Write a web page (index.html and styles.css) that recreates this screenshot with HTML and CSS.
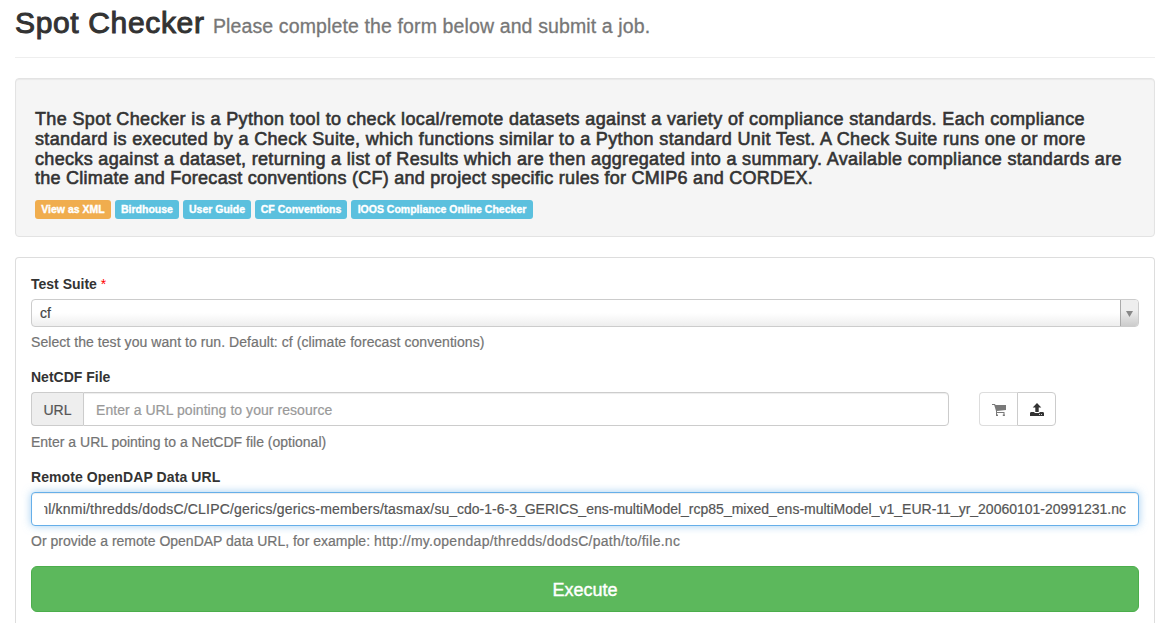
FILE: index.html
```html
<!DOCTYPE html>
<html lang="en">
<head>
<meta charset="utf-8">
<title>Spot Checker</title>
<link rel="stylesheet" href="styles.css">
</head>
<body>
<header class="page-header">
<h2 class="title"><span class="title-main">Spot Checker</span> <small class="title-sub">Please complete the form below and submit a job.</small></h2>
</header>
<section class="well">
<h4 class="intro">
<span class="line l1">The Spot Checker is a Python tool to check local/remote datasets against a variety of compliance standards. Each compliance</span>
<span class="line l2">standard is executed by a Check Suite, which functions similar to a Python standard Unit Test. A Check Suite runs one or more</span>
<span class="line l3">checks against a dataset, returning a list of Results which are then aggregated into a summary. Available compliance standards are</span>
<span class="line l4">the Climate and Forecast conventions (CF) and project specific rules for CMIP6 and CORDEX.</span>
</h4>
<div class="tags">
<a class="tag tag-warning t1">View as XML</a>
<a class="tag t2">Birdhouse</a>
<a class="tag t3">User Guide</a>
<a class="tag t4">CF Conventions</a>
<a class="tag t5">IOOS Compliance Online Checker</a>
</div>
</section>
<main class="panel">
<div class="group">
<div class="label">Test Suite <span class="required">*</span></div>
<div class="select"><span class="select-value">cf</span><span class="select-arrow"><svg width="7" height="6" viewBox="0 0 7 6"><path d="M0 0h7L3.5 6z" fill="#888"/></svg></span></div>
<div class="help help-suite">Select the test you want to run. Default: cf (climate forecast conventions)</div>
</div>
<div class="group">
<div class="label">NetCDF File</div>
<div class="resource">
<div class="input-group"><span class="addon">URL</span><div class="input"><span class="placeholder">Enter a URL pointing to your resource</span></div></div>
<div class="buttons">
<button class="btn btn-cart" aria-label="Cart"><svg width="14" height="14" viewBox="0 0 14 14"><path d="M0 1h3l.5 1H14v5L5 8v1h7.500v1H4V8L2.200 2H0z" fill="#333"/><path d="M4 10h1v3H4zM11.500 10h1v3h-1z" fill="#333"/><path d="M4 11.500h2V13H4zM10.800 11.500h2V13h-2z" fill="#333"/></svg></button>
<button class="btn btn-upload" aria-label="Upload"><svg width="14" height="14" viewBox="0 0 14 14"><path d="M7 0l4.300 4.500H8.700V9H5.300V4.500H2.700z" fill="#333"/><path d="M.8 9H4.500v1h5V9h3.700l.8 1v3H0v-3z" fill="#333"/><path d="M9 11h1v1H9zM11 11h1v1h-1z" fill="#ccc"/></svg></button>
</div>
</div>
<div class="help">Enter a URL pointing to a NetCDF file (optional)</div>
</div>
<div class="group">
<div class="label label-remote">Remote OpenDAP Data URL</div>
<div class="input input-focus"><div class="clip"><span class="url"><span class="url-path">nl/knmi/thredds/dodsC/CLIPC/gerics/gerics-members/tasmax/</span>su_cdo-1-6-3_GERICS_ens-multiModel_rcp85_mixed_ens-multiModel_v1_EUR-11_yr_20060101-20991231.nc</span></div></div>
<div class="help">Or provide a remote OpenDAP data URL, for example: <span class="example-url">http://my.opendap/thredds/dodsC/path/to/file.nc</span></div>
</div>
<button class="execute">Execute</button>
</main>
</body>
</html>
```
FILE: styles.css
```css
* { box-sizing: border-box; }
html, body { margin: 0; height: 623px; overflow: hidden; }
body {
  padding: 0 12px 0 15px;
  background: #fff;
  color: #333;
  font: 14px/20px "Liberation Sans", Arial, sans-serif;
  -webkit-text-stroke: 0.2px currentColor;
}
button { font: inherit; }
.page-header { height: 58px; padding-top: 6px; border-bottom: 1px solid #eee; }
.title { margin: 0; font-size: 30px; line-height: 33px; font-weight: 400; white-space: nowrap; }
.title-main { letter-spacing: 0.65px; -webkit-text-stroke: 1px #333; }
.title-sub { font-size: 19.5px; letter-spacing: 0.125px; color: #777; -webkit-text-stroke: 0.3px #777; }
.well {
  height: 159px;
  margin: 20px 0;
  padding: 20px 19px;
  border: 1px solid #e3e3e3;
  border-radius: 4px;
  background: #f5f5f5;
  box-shadow: inset 0 1px 1px rgba(0, 0, 0, .05);
}
.intro { margin: 11px 0 10px; font-size: 18px; line-height: 19.8px; font-weight: 400; -webkit-text-stroke: 0.6px #333; }
.line { display: table; white-space: nowrap; }
.l1 { letter-spacing: 0.369px; }
.l2 { letter-spacing: 0.347px; }
.l3 { letter-spacing: 0.33px; }
.l4 { letter-spacing: 0.264px; }
.tags { display: flex; gap: 4px; padding-top: 1px; }
.tag {
  display: flex;
  justify-content: center;
  height: 19px;
  border-radius: 3px;
  background: #5bc0de;
  color: #fff;
  font-size: 10.5px;
  line-height: 19px;
  font-weight: 700;
  white-space: nowrap;
  -webkit-text-stroke: 0.35px #fff;
}
.tag-warning { background: #f0ad4e; }
.t1 { width: 76px; }
.t2 { width: 64px; }
.t3 { width: 68px; }
.t4 { width: 92px; }
.t5 { width: 182px; }
.panel {
  height: 366px;
  padding: 16px 15px 0;
  border: 1px solid #ddd;
  border-bottom: 0;
  border-radius: 4px 4px 0 0;
}
.group { margin-bottom: 15px; }
.label { height: 20px; margin-bottom: 5px; font-weight: 700; white-space: nowrap; -webkit-text-stroke: 0; }
.label-remote { letter-spacing: 0.09px; }
.required { color: #f00; font-weight: 400; }
.help { height: 20px; margin-top: 5px; color: #737373; white-space: nowrap; }
.help-suite { letter-spacing: 0.06px; }
.example-url { letter-spacing: 0.28px; }
.select {
  display: flex;
  justify-content: space-between;
  height: 28px;
  border: 1px solid #ccc;
  border-radius: 4px;
  background: linear-gradient(to top, #eee 0%, #fff 50%);
  overflow: hidden;
}
.select-value { padding-left: 8px; line-height: 27px; color: #444; }
.select-arrow {
  display: flex;
  align-items: center;
  justify-content: center;
  width: 18px;
  padding-top: 2px;
  border-left: 1px solid #aaa;
  background: linear-gradient(to top, #ccc 0%, #eee 60%);
}
.resource { display: flex; gap: 30px; height: 35px; }
.input-group { display: flex; width: 918px; }
.addon {
  width: 52px;
  height: 34px;
  border: 1px solid #ccc;
  border-right: 0;
  border-radius: 4px 0 0 4px;
  background: #eee;
  color: #555;
  line-height: 34px;
  text-align: center;
}
.input {
  flex: 1;
  height: 34px;
  padding: 0 12px;
  border: 1px solid #ccc;
  border-radius: 4px;
  background: #fff;
  color: #555;
  line-height: 34px;
  white-space: nowrap;
  box-shadow: inset 0 1px 1px rgba(0, 0, 0, .075);
}
.input-group .input { border-radius: 0 4px 4px 0; }
.placeholder { color: #999; letter-spacing: 0.05px; }
.input-focus {
  border-color: #66afe9;
  line-height: 33px;
  box-shadow: inset 0 1px 1px rgba(0, 0, 0, .075), 0 0 8px rgba(102, 175, 233, .6);
}
.clip { display: flex; justify-content: flex-end; overflow: hidden; }
.url-path { letter-spacing: 0.2px; }
.buttons { display: flex; }
.btn {
  display: flex;
  align-items: center;
  justify-content: center;
  width: 39px;
  height: 34px;
  padding: 2px 0 0;
  border: 1px solid #ccc;
  background: #fff;
}
.btn-cart { border-right: 0; border-color: #ddd; border-radius: 4px 0 0 4px; width: 38px; }
.btn-cart svg { opacity: .65; }
.btn-upload { border-radius: 0 4px 4px 0; }
.execute {
  display: block;
  width: 100%;
  height: 46px;
  padding: 2px 0 0;
  border: 1px solid #4cae4c;
  border-radius: 6px;
  background: #5cb85c;
  color: #fff;
  font-size: 18px;
  -webkit-text-stroke: 0.4px #fff;
}
```
